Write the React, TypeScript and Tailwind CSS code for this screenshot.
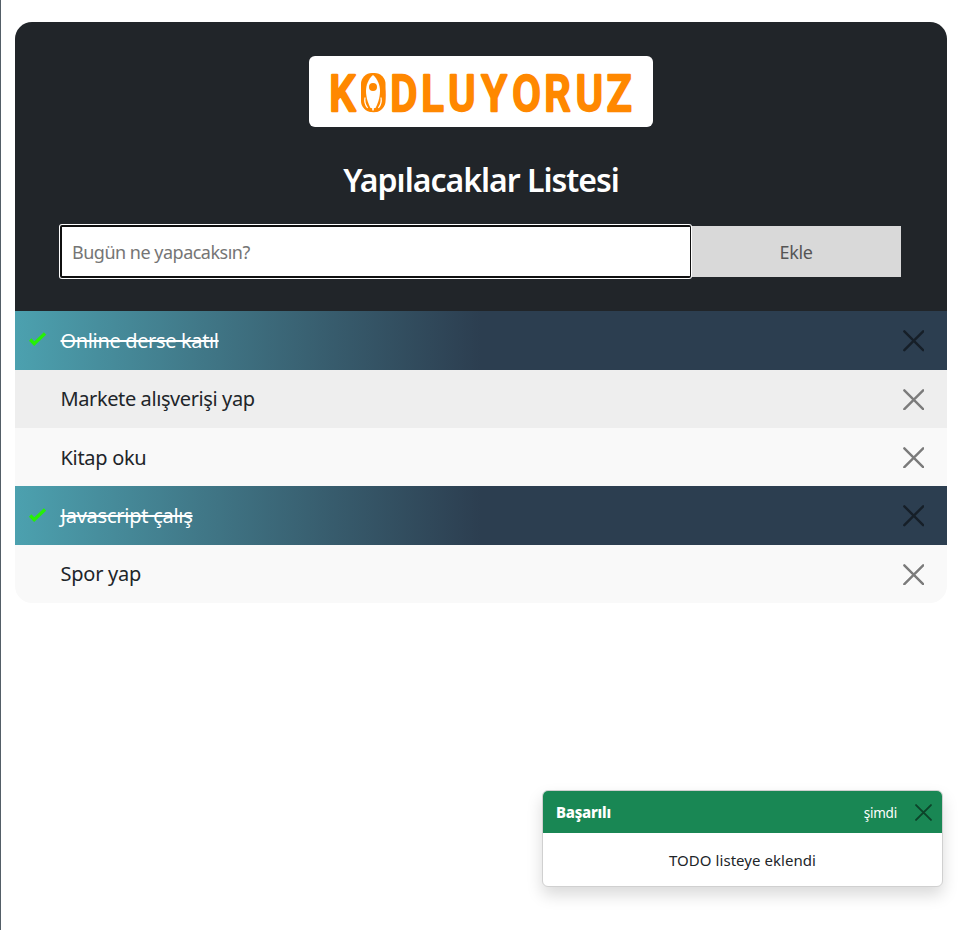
function Logo() {
  return (
    <svg width="344" height="71" viewBox="309 56 344 71" className="block">
      <text
        transform="scale(.83 1)"
        x="396.700 435.300 470.200 507.500 540 580.200 617.200 655.600 693.700 731"
        y="110.900"
        fill="#ff8800"
        stroke="#ff8800"
        strokeWidth="2.600"
        strokeLinejoin="round"
        className="font-['Roboto'] text-[50px] font-medium"
      >
        K<tspan className="text-[44px]">O</tspan>DLUYORUZ
      </text>
      <rect x="361" y="73" width="24.500" height="39" rx="11" fill="#ff8800" />
      <path d="M373 75C368.500 79 366 85 366 91c0 7 2.500 13 4.500 17h5c2-4 4.500-10 4.500-17 0-6-2.500-12-7-16z" fill="#fff" />
      <path d="M365 97.500c-.8 4.500.2 7.500 2.600 10.500M381 97.500c.8 4.500-.2 7.500-2.600 10.500" fill="none" stroke="#fff" strokeWidth="1.200" />
      <path d="M371.200 105l1.800 5.500 1.800-5.500z" fill="#fff" stroke="#fff" strokeWidth=".8" />
      <circle cx="373" cy="87" r="4" fill="#ff8800" />
    </svg>
  );
}

function Cross({ className, size }: { className: string; size: number }) {
  return (
    <svg width={size} height={size} viewBox="0 0 16 16" className={className}>
      <path d="M1 1l14 14M15 1L1 15" fill="none" stroke="currentColor" strokeWidth="1.800" strokeLinecap="round" />
    </svg>
  );
}

const ITEMS = [
  { text: 'Online derse katıl', done: true, bg: '', tracking: 'tracking-[-0.35px]' },
  { text: 'Markete alışverişi yap', done: false, bg: 'bg-[#eeeeee]', tracking: 'tracking-[-0.4px]' },
  { text: 'Kitap oku', done: false, bg: 'bg-[#f9f9f9]', tracking: 'tracking-[-0.3px]' },
  { text: 'Javascript çalış', done: true, bg: '', tracking: 'tracking-[-0.25px]' },
  { text: 'Spor yap', done: false, bg: 'bg-[#f9f9f9]', tracking: 'tracking-[-0.25px]' },
];

export default function App() {
  return (
    <div className="h-[930px] overflow-hidden border-l border-[#535e67] bg-white pt-[22px] pl-[14px] font-['Noto_Sans','Open_Sans',sans-serif] text-[#212529]">
      <main className="w-[932px] overflow-hidden rounded-[17px]">
        <header className="flex h-[289.3px] flex-col items-center bg-[#212529] pt-[34px]">
          <div className="overflow-hidden rounded-[6px] bg-white">
            <Logo />
          </div>
          <h1 className="mt-[32px] h-[42px] text-[32px] leading-[42px] font-semibold tracking-[-1px] whitespace-nowrap text-white">
            Yapılacaklar Listesi
          </h1>
          <div className="mt-[24px] mr-px flex w-[841px] items-center">
            <input
              placeholder="Bugün ne yapacaksın?"
              className="relative h-[53px] w-[631px] shrink-0 rounded-[2px] border-2 border-r border-[#101010] bg-white px-[10px] text-[18px] tracking-[-0.5px] shadow-[0_0_0_1px_white] outline-none placeholder:text-[#757575]"
            />
            <button className="h-[51px] w-[210px] bg-[#d9d9d9] pt-px text-[18px] tracking-[-0.4px] text-[#555555]">Ekle</button>
          </div>
        </header>
        <ul>
          {ITEMS.map((item) => (
            <li
              key={item.text}
              className={`flex h-[58.35px] items-center pt-px pr-[23px] ${item.done ? 'bg-linear-to-r from-[#4ca1af] to-[#2c3e50] to-50% text-white line-through decoration-2' : item.bg}`}
            >
              <span className="w-[45.5px] shrink-0 pl-[13px]">
                {item.done && (
                  <svg width="20" height="18" viewBox="0 0 20 18" className="-mt-[3px] block">
                    <path d="M2.200 9.500l4 4.200L17 3.500" fill="none" stroke="#26f005" strokeWidth="3.300" />
                  </svg>
                )}
              </span>
              <span className={`text-[20px] whitespace-nowrap ${item.tracking}`}>{item.text}</span>
              <Cross size={21.5} className={`ml-auto ${item.done ? 'text-[#161f28]' : 'text-[#7b7b7b]'}`} />
            </li>
          ))}
        </ul>
      </main>
      <aside className="mt-[187px] ml-[527px] h-[97px] w-[401px] overflow-hidden rounded-[6px] border border-[#d0d0d0] bg-white shadow-[0_8px_16px_rgba(0,0,0,0.15)]">
        <div className="flex h-[42px] items-center bg-[#198754] pr-[10px] pl-[13px] text-white">
          <strong className="text-[15px] font-extrabold tracking-[-0.25px]">Başarılı</strong>
          <small className="mr-[18px] ml-auto pt-[2px] text-[13.5px] tracking-[-0.2px]">şimdi</small>
          <Cross size={17} className="text-[#0c4329]" />
        </div>
        <div className="pt-[16px] text-center text-[15px] leading-[22px] tracking-[0.05px]">TODO listeye eklendi</div>
      </aside>
    </div>
  );
}
